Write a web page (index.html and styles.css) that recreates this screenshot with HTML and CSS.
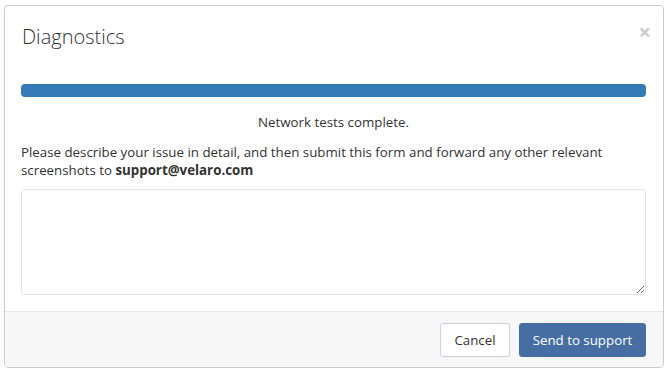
FILE: index.html
```html
<!DOCTYPE html>
<html lang="en">
<head>
    <meta charset="UTF-8">
    <meta name="viewport" content="width=device-width, initial-scale=1.0">
    <title>Diagnostics</title>
    <link rel="stylesheet" href="styles.css">
</head>
<body>
    <div class="modal">
        <div class="modal-header">
            <h4 class="modal-title">Diagnostics</h4>
            <button class="close" type="button" aria-label="Close">&times;</button>
        </div>
        <div class="modal-body">
            <div class="progress">
                <div class="progress-fill" style="width: 100%;"></div>
            </div>
            <p class="status">Network tests complete.</p>
            <p class="intro">Please describe your issue in detail, and then submit this form and forward any other relevant screenshots to <strong>support@velaro.com</strong></p>
            <textarea class="details"></textarea>
        </div>
        <div class="modal-footer">
            <button class="btn btn-default" type="button">Cancel</button>
            <button class="btn btn-primary" type="button">Send to support</button>
        </div>
    </div>
</body>
</html>
```

FILE: styles.css
```css
/* Basic reset */
* {
    margin: 0;
    padding: 0;
    box-sizing: border-box;
}

body {
    font-family: 'Open Sans', 'Liberation Sans', sans-serif;
    font-size: 13.3px;
    line-height: 18px;
    color: #333;
    background-color: #fff;
    padding: 5px 0 0 4px;
}

.modal {
    width: 660px;
    background-color: #fff;
    border: 1px solid #ccc;
    border-radius: 4px;
    overflow: hidden;
}

.modal-header {
    display: flex;
    justify-content: space-between;
    align-items: flex-start;
    padding: 17px 12px 13px 17px;
}

.modal-title {
    font-size: 20px;
    font-weight: 300;
    line-height: 28px;
    color: #333;
}

.close {
    background: none;
    border: 0;
    font-family: 'Open Sans', 'Liberation Sans', sans-serif;
    font-size: 22px;
    font-weight: 700;
    line-height: 1;
    color: #000;
    opacity: 0.2;
    margin-top: -3px;
    cursor: pointer;
}

.modal-body {
    padding: 20px 17px 16px 16px;
}

.progress {
    height: 13px;
    background-color: #e9e9e9;
    border-radius: 4px;
    overflow: hidden;
}

.progress-fill {
    height: 100%;
    background-color: #337ab7;
}

.status {
    text-align: center;
    margin-top: 16px;
}

.intro {
    margin-top: 12px;
}

.details {
    display: block;
    width: 100%;
    height: 106px;
    margin-top: 10px;
    border: 1px solid #e3e3e3;
    border-radius: 4px;
    padding: 6px 12px;
    font-family: inherit;
    font-size: 13px;
    resize: vertical;
}

.modal-footer {
    display: flex;
    justify-content: flex-end;
    gap: 9px;
    padding: 11px 17px 10px;
    background-color: #f7f7f7;
    border-top: 1px solid #e5e5e5;
}

.btn {
    height: 34px;
    padding: 0;
    border-radius: 3px;
    font-family: 'Open Sans', 'Liberation Sans', sans-serif;
    font-size: 13.3px;
    white-space: nowrap;
    cursor: pointer;
}

.btn-default {
    width: 70px;
    background-color: #fff;
    border: 1px solid #cdd3dc;
    color: #333;
}

.btn-primary {
    width: 127px;
    background-color: #476ea2;
    border: 1px solid #476ea2;
    color: #fff;
}
```
